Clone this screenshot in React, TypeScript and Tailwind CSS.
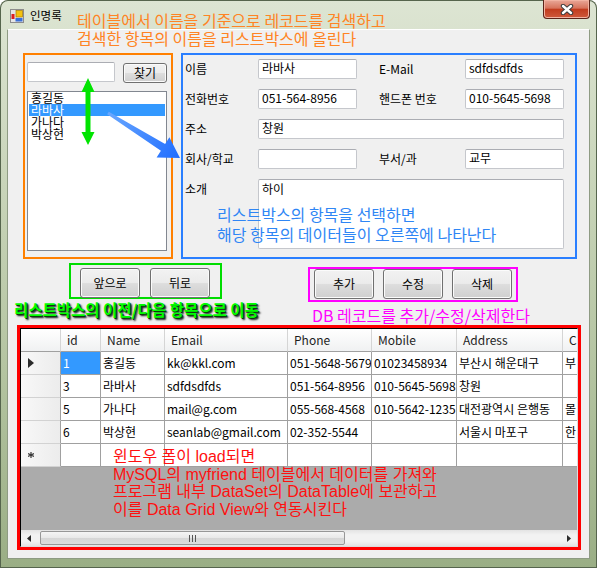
import React from "react";

type Col = { name: string; w: string };

const cols: Col[] = [
  { name: "id", w: "w-[40px]" },
  { name: "Name", w: "w-[64px]" },
  { name: "Email", w: "w-[123px]" },
  { name: "Phone", w: "w-[84px]" },
  { name: "Mobile", w: "w-[85px]" },
  { name: "Address", w: "w-[106px]" },
  { name: "C", w: "w-[80px]" },
];

const rows: string[][] = [
  ["1", "홍길동", "kk@kkl.com", "051-5648-5679", "01023458934", "부산시 해운대구", "부"],
  ["3", "라바사", "sdfdsdfds", "051-564-8956", "010-5645-5698", "창원", ""],
  ["5", "가나다", "mail@g.com", "055-568-4568", "010-5642-1235", "대전광역시 은행동", "몰"],
  ["6", "박상현", "seanlab@gmail.com", "02-352-5544", "", "서울시 마포구", "한"],
];

function WinButton({ children, className = "" }: { children: React.ReactNode; className?: string }) {
  return (
    <div
      className={`flex shrink-0 items-center justify-center rounded-[3px] border border-[#707070] bg-[linear-gradient(#f2f2f2_0%,#ebebeb_48%,#dddddd_52%,#cfcfcf_100%)] text-[12px] leading-none text-black shadow-[inset_0_0_0_1px_#fbfbfb] ${className}`}
    >
      {children}
    </div>
  );
}

function TextBox({ children, className = "" }: { children?: React.ReactNode; className?: string }) {
  return (
    <div
      className={`shrink-0 overflow-hidden rounded-[2px] border border-[#c5c7cc] border-t-[#abadb3] bg-white px-[3px] text-[12px] leading-[16px] whitespace-nowrap text-black ${className}`}
    >
      {children}
    </div>
  );
}

function Label({ children, className = "" }: { children: React.ReactNode; className?: string }) {
  return <div className={`shrink-0 pt-[2px] text-[12px] leading-[16px] text-black ${className}`}>{children}</div>;
}

function TitleBar() {
  return (
    <div className="flex h-[29px] shrink-0 items-start">
      <svg className="ml-[3px] mt-[9px]" width="14" height="14" viewBox="0 0 14 14">
        <rect x="0.5" y="0.5" width="13" height="13" fill="#e6e6e6" stroke="#8c8c8c" />
        <rect x="6" y="1.5" width="6.5" height="6.5" fill="#f4c20d" stroke="#a37a00" strokeWidth="0.7" />
        <rect x="1.5" y="5" width="3" height="5" fill="#dd1f1f" />
        <rect x="5.5" y="9" width="7" height="3.5" fill="#3a6fd8" />
      </svg>
      <div className="ml-[6px] mt-[8px] text-[11.5px] leading-[14px] text-black">인명록</div>
      <div className="ml-auto flex h-[19px] w-[47px] items-center justify-center rounded-b-[4px] border border-t-0 border-[#5b2419] bg-[linear-gradient(#e9a898_0%,#d7735c_45%,#c23c1e_52%,#cf5a3c_100%)] shadow-[inset_0_0_0_1px_#f2b3a2]">
        <svg width="14" height="11" viewBox="0 0 14 11">
          <path d="M3 2 L11 9 M11 2 L3 9" stroke="#3d3d3d" strokeWidth="4.4" strokeLinecap="round" />
          <path d="M3 2 L11 9 M11 2 L3 9" stroke="#ffffff" strokeWidth="2.4" strokeLinecap="round" />
        </svg>
      </div>
    </div>
  );
}

function SearchPanel() {
  const items = ["홍길동", "라바사", "가나다", "박상현"];
  return (
    <div className="h-[206px] w-[150px] shrink-0 border-2 border-[#ff8000] pl-[2px] pt-[7px]">
      <div className="flex items-start gap-[8px]">
        <TextBox className="h-[20px] w-[88px]" />
        <WinButton className="mt-[1px] h-[20px] w-[44px]">찾기</WinButton>
      </div>
      <div className="mt-[8px] h-[160px] w-[140px] border border-[#828790] bg-white">
        {items.map((it, i) => (
          <div
            key={it}
            className={`mx-[1px] h-[12px] px-[2px] text-[12px] leading-[12px] ${i === 1 ? "bg-[#3399ff] text-white" : "text-black"}`}
          >
            {it}
          </div>
        ))}
      </div>
    </div>
  );
}

function DetailPanel() {
  return (
    <div className="flex h-[206px] w-[396px] shrink-0 flex-col gap-[10px] border-2 border-[#2a7fff] pl-[2px] pt-[4px]">
      <div className="flex items-start">
        <Label className="w-[73px]">이름</Label>
        <TextBox className="h-[20px] w-[99px]">라바사</TextBox>
        <Label className="ml-[22px] w-[86px]">E-Mail</Label>
        <TextBox className="h-[20px] w-[99px]">sdfdsdfds</TextBox>
      </div>
      <div className="flex items-start">
        <Label className="w-[73px]">전화번호</Label>
        <TextBox className="h-[20px] w-[99px]">051-564-8956</TextBox>
        <Label className="ml-[22px] w-[86px]">핸드폰 번호</Label>
        <TextBox className="h-[20px] w-[99px]">010-5645-5698</TextBox>
      </div>
      <div className="flex items-start">
        <Label className="w-[73px]">주소</Label>
        <TextBox className="h-[20px] w-[306px]">창원</TextBox>
      </div>
      <div className="flex items-start">
        <Label className="w-[73px]">회사/학교</Label>
        <TextBox className="h-[20px] w-[99px]" />
        <Label className="ml-[22px] w-[86px]">부서/과</Label>
        <TextBox className="h-[20px] w-[99px]">교무</TextBox>
      </div>
      <div className="flex items-start">
        <Label className="w-[73px]">소개</Label>
        <TextBox className="h-[70px] w-[306px] pt-[1px]">하이</TextBox>
      </div>
    </div>
  );
}

function Grid() {
  const head = "shrink-0 border-r border-b border-r-[#d5d5d5] border-b-[#a0a0a0] bg-[linear-gradient(#ffffff,#f0f1f2)]";
  const rowHead = "flex w-[40px] shrink-0 items-center border-r border-b border-r-[#a0a0a0] border-b-[#d2d2d2] bg-[linear-gradient(90deg,#f8f8f8,#ececec)] pl-[7px]";
  const cell = "flex shrink-0 items-center overflow-hidden whitespace-nowrap border-r border-b border-[#a0a0a0] px-[2px] text-[12px]";
  return (
    <div className="flex h-full flex-col overflow-hidden border border-t-black border-l-black border-r-[#dcdcdc] border-b-[#dcdcdc] bg-[#ababab]">
      <div className="flex h-[23px] shrink-0">
        <div className={`w-[40px] ${head}`} />
        {cols.map((c) => (
          <div key={c.name} className={`flex items-center pl-[6px] text-[12px] text-[#1e1e1e] ${c.w} ${head}`}>
            {c.name}
          </div>
        ))}
      </div>
      {rows.map((r, ri) => (
        <div key={ri} className="flex h-[23px] shrink-0">
          <div className={rowHead}>
            {ri === 0 && (
              <svg width="6" height="10" viewBox="0 0 6 10">
                <path d="M0 0 L6 5 L0 10 Z" fill="#2b2b2b" />
              </svg>
            )}
          </div>
          {r.map((v, ci) => (
            <div
              key={ci}
              className={`${cell} ${cols[ci].w} ${ri === 0 && ci === 0 ? "bg-[#3399ff] text-white" : "bg-white text-black"}`}
            >
              {v}
            </div>
          ))}
        </div>
      ))}
      <div className="flex h-[23px] shrink-0">
        <div className={rowHead}>
          <svg width="6" height="6" viewBox="0 0 6 6">
            <path d="M3 0 V6 M0 1.5 L6 4.5 M6 1.5 L0 4.5" stroke="#3a3a3a" strokeWidth="1.2" />
          </svg>
        </div>
        {cols.map((c) => (
          <div key={c.name} className={`${cell} ${c.w} bg-white`} />
        ))}
      </div>
      <div className="flex-1" />
      <div className="flex h-[16px] shrink-0 items-center bg-[linear-gradient(#e3e3e3,#f2f2f2_30%,#f2f2f2_70%,#e3e3e3)]">
        <div className="flex h-[16px] w-[16px] items-center justify-center">
          <svg width="4" height="7" viewBox="0 0 4 7">
            <path d="M4 0 L0 3.5 L4 7 Z" fill="#2b2b2b" />
          </svg>
        </div>
        <div className="ml-[3px] flex h-[14px] w-[305px] items-center justify-center rounded-[2px] border border-[#979797] bg-[linear-gradient(#f5f5f5,#e8e8e8_50%,#d6d6d6_51%,#dcdcdc)]">
          <svg width="7" height="7" viewBox="0 0 7 7">
            <path d="M0.5 0 V7 M3.5 0 V7 M6.5 0 V7" stroke="#555" strokeWidth="1" />
          </svg>
        </div>
        <div className="ml-auto flex h-[16px] w-[16px] items-center justify-center">
          <svg width="4" height="7" viewBox="0 0 4 7">
            <path d="M0 0 L4 3.5 L0 7 Z" fill="#2b2b2b" />
          </svg>
        </div>
      </div>
    </div>
  );
}

export default function App() {
  return (
    <div className="relative flex h-[568px] w-[597px] flex-col overflow-hidden rounded-t-[8px] bg-[linear-gradient(180deg,#dde5d3_0%,#cdd8bf_25%,#b4c4a1_65%,#9aae85_100%)] px-[7px] pb-[9px] shadow-[inset_0_0_0_1px_#56654d] [font-family:'Noto_Sans_CJK_KR','Noto_Sans_CJK_SC',sans-serif]">
      <TitleBar />
      <div className="h-[530px] w-[583px] shrink-0 border border-[#8e9b83] border-t-white bg-[#f0f0f0]">
        <div className="flex gap-[8px] pl-[15px] pt-[23px]">
          <SearchPanel />
          <DetailPanel />
        </div>

        <div className="mt-[4px] flex h-[39px] items-start pl-[61px]">
          <div className="flex h-[36px] w-[153px] shrink-0 gap-[10px] border-2 border-[#00dd00] pl-[9px] pt-[3px]">
            <WinButton className="h-[30px] w-[60px]">앞으로</WinButton>
            <WinButton className="h-[30px] w-[60px]">뒤로</WinButton>
          </div>
          <div className="ml-[86px] mt-[4px] flex h-[35px] w-[210px] shrink-0 gap-[9px] border-2 border-[#ff00ff] pl-[4px]">
            <WinButton className="h-[30px] w-[60px]">추가</WinButton>
            <WinButton className="h-[30px] w-[60px]">수정</WinButton>
            <WinButton className="h-[30px] w-[60px]">삭제</WinButton>
          </div>
        </div>

        <div className="flex h-[23px] items-start">
          <div className="-mt-[1px] w-[304px] shrink-0 pl-[6px] text-[15.5px] font-bold leading-[17px] whitespace-nowrap text-[#00ff00] [text-shadow:1px_1px_0_#0a3a0a,2px_2px_2px_#000]">
            리스트박스의 이전/다음 항목으로 이동
          </div>
          <div className="mt-[4px] text-[16px] leading-[18px] whitespace-nowrap text-[#ff00ff]">
            DB 레코드를 추가/수정/삭제한다
          </div>
        </div>

        <div className="ml-[9px] h-[225px] w-[564px] border-[3px] border-[#ff0000]">
          <Grid />
        </div>
      </div>

      {/* annotations drawn over the form */}
      <div className="pointer-events-none absolute left-[77px] top-[11px] text-[16px] leading-[18px] whitespace-nowrap text-[#ff8424]">
        <div>테이블에서 이름을 기준으로 레코드를 검색하고</div>
        <div>검색한 항목의 이름을 리스트박스에 올린다</div>
      </div>
      <div className="pointer-events-none absolute left-[217px] top-[205px] text-[16px] leading-[19.5px] whitespace-nowrap text-[#2f86f5]">
        <div>리스트박스의 항목을 선택하면</div>
        <div>해당 항목의 데이터들이 오른쪽에 나타난다</div>
      </div>
      <div className="pointer-events-none absolute left-[113px] top-[448px] text-[16px] leading-[17.5px] whitespace-nowrap text-[#ff1010] [font-family:'Liberation_Sans','Noto_Sans_CJK_KR',sans-serif]">
        <div>윈도우 폼이 load되면</div>
        <div>MySQL의 myfriend 테이블에서 데이터를 가져와</div>
        <div>프로그램 내부 DataSet의 DataTable에 보관하고</div>
        <div>이를 Data Grid View와 연동시킨다</div>
      </div>
      <svg className="pointer-events-none absolute left-0 top-0" width="597" height="568" viewBox="0 0 597 568">
        <defs>
          <linearGradient id="blueArrow" x1="108" y1="112" x2="180" y2="158" gradientUnits="userSpaceOnUse">
            <stop offset="0" stopColor="#6aa8ff" />
            <stop offset="1" stopColor="#1f6dff" />
          </linearGradient>
        </defs>
        <polygon
          points="88,78 94.5,92 90.5,92 90.5,132 94.5,132 88,145 81.5,132 85.5,132 85.5,92 81.5,92"
          fill="#00e400"
        />
        <polygon
          points="108.8,111.7 165.1,144 169.4,137.2 180,158 156.6,157.6 160.9,150.8 107.2,114.3"
          fill="url(#blueArrow)"
        />
      </svg>
    </div>
  );
}
